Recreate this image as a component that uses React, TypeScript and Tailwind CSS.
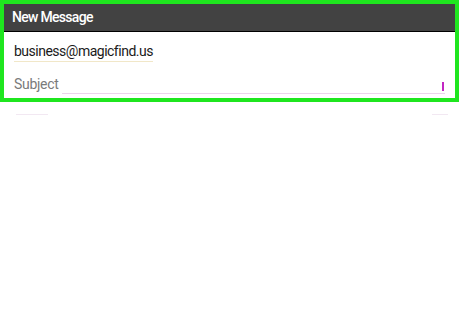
export default function App() {
  return (
    <div className="w-[459px] h-[319px] bg-white font-['Roboto',sans-serif]">
      <div className="h-[102px] border-[4px] border-[#1fe61f] bg-white flex flex-col">
        <div className="h-[28px] bg-[#424242] border-b border-black flex items-center pl-[8px]">
          <span className="text-white text-[14px] font-medium tracking-[-0.7px]">New Message</span>
        </div>
        <div className="pl-[10px] pt-[7px]">
          <div className="inline-block text-[14px] leading-[16px] tracking-[-0.5px] text-[#1a1a1a] border-b border-[#f1e7c8] pb-[2px]">
            business@magicfind.us
          </div>
        </div>
        <div className="flex items-end pl-[10px] pr-[10px] pt-[13px]">
          <span className="text-[14px] leading-[16px] tracking-[-0.3px] text-[#7a7a7a]">Subject</span>
          <div className="flex-1 h-[12px] border-b border-[#ecd3ec] mb-[-2px] ml-[4px] flex justify-end items-start">
            <span className="w-[2px] h-[9px] bg-[#c226c2] mr-[1px]"></span>
          </div>
        </div>
      </div>
      <div className="flex justify-between px-[16px] mt-[12px]">
        <span className="w-[32px] h-px bg-[#f2e8f2]"></span>
        <span className="w-[16px] h-px bg-[#f2e8f2] mr-[-5px]"></span>
      </div>
    </div>
  );
}
